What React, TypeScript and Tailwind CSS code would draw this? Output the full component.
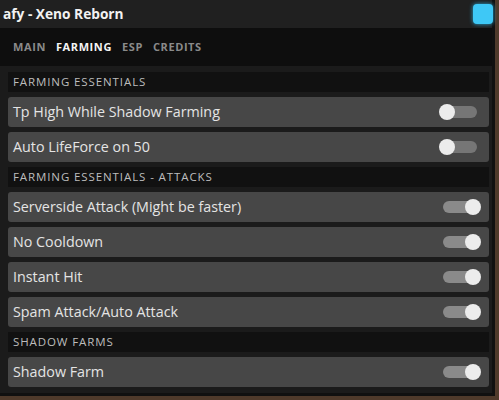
import React from "react";

type Item =
  | { kind: "header"; label: string }
  | { kind: "toggle"; label: string; on: boolean };

const items: Item[] = [
  { kind: "header", label: "Farming Essentials" },
  { kind: "toggle", label: "Tp High While Shadow Farming", on: false },
  { kind: "toggle", label: "Auto LifeForce on 50", on: false },
  { kind: "header", label: "Farming Essentials - Attacks" },
  { kind: "toggle", label: "Serverside Attack (Might be faster)", on: true },
  { kind: "toggle", label: "No Cooldown", on: true },
  { kind: "toggle", label: "Instant Hit", on: true },
  { kind: "toggle", label: "Spam Attack/Auto Attack", on: true },
  { kind: "header", label: "Shadow Farms" },
  { kind: "toggle", label: "Shadow Farm", on: true },
];

const tabs = ["Main", "Farming", "ESP", "Credits"];

function Toggle({ on }: { on: boolean }) {
  return (
    <div className="relative w-[42px] h-[16px] mr-[8px]">
      <div
        className={`absolute left-[4px] right-[4px] top-[2px] h-[12px] rounded-full ${
          on ? "bg-[#8a8a8a]" : "bg-[#767676]"
        }`}
      />
      <div
        className={`absolute top-0 w-[16px] h-[16px] rounded-full bg-[#ececec] ${
          on ? "right-0" : "left-0"
        }`}
      />
    </div>
  );
}

export default function App() {
  return (
    <div
      className="w-[499px] h-[400px] bg-[#4f3a2b] overflow-hidden"
      style={{ fontFamily: '"Open Sans", "Liberation Sans", sans-serif' }}
    >
      <div className="w-[495px] h-[396px] flex flex-col border-r-[3px] border-b-[3px] border-[#101010] bg-[#1b1b1b]">
        <div className="h-[28px] bg-[#202020] flex items-center justify-between pl-[3px]">
          <span className="text-[13.7px] font-bold text-[#f2f2f2]">afy - Xeno Reborn</span>
          <div className="w-[20px] h-[20px] rounded-[4px] bg-[#3ec8f6] shadow-[0_0_4px_#2aa8d4] -mr-[1px]" />
        </div>
        <div className="h-[38px] bg-[#0e0e0e] flex items-center gap-[10px] pl-[13px]">
          {tabs.map((t) => (
            <span
              key={t}
              className={`text-[11px] font-bold uppercase tracking-[0.6px] ${
                t === "Farming" ? "text-[#f4f4f4]" : "text-[#8a8a8a]"
              }`}
            >
              {t}
            </span>
          ))}
        </div>
        <div className="flex-1 flex flex-col gap-[5px] pl-[8px] pr-[3px] pt-[6px]">
          {items.map((it, i) =>
            it.kind === "header" ? (
              <div
                key={i}
                className="h-[20px] bg-[#111111] flex items-center pl-[5px] text-[11.5px] uppercase tracking-[0.9px] text-[#bdbdbd]"
              >
                {it.label}
              </div>
            ) : (
              <div
                key={i}
                className="h-[30px] bg-[#474747] rounded-[3px] flex items-center justify-between pl-[5px]"
              >
                <span className="text-[14.3px] font-medium text-[#e4e4e4]">{it.label}</span>
                <Toggle on={it.on} />
              </div>
            )
          )}
        </div>
      </div>
    </div>
  );
}
